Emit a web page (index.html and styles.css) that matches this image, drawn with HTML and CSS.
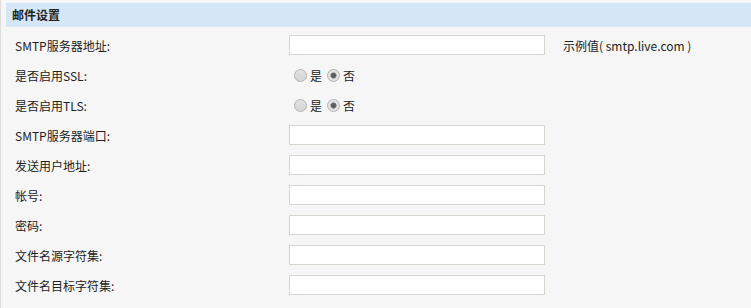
FILE: index.html
```html
<!DOCTYPE html>
<html lang="zh-CN">
<head>
  <meta charset="UTF-8" />
  <title>邮件设置</title>
  <link rel="stylesheet" href="styles.css">
</head>
<body>
  <div class="panel">
    <div class="panel-title">邮件设置</div>
    <div class="form">
      <div class="row">
        <label class="label">SMTP服务器地址:</label>
        <input class="field" type="text" />
        <span class="hint">示例值( smtp.live.com )</span>
      </div>
      <div class="row">
        <label class="label">是否启用SSL:</label>
        <span class="choice"><input type="radio" name="ssl" class="radio" /><span>是</span><input type="radio" name="ssl" class="radio" checked /><span>否</span></span>
      </div>
      <div class="row">
        <label class="label">是否启用TLS:</label>
        <span class="choice"><input type="radio" name="tls" class="radio" /><span>是</span><input type="radio" name="tls" class="radio" checked /><span>否</span></span>
      </div>
      <div class="row">
        <label class="label">SMTP服务器端口:</label>
        <input class="field" type="text" />
      </div>
      <div class="row">
        <label class="label">发送用户地址:</label>
        <input class="field" type="text" />
      </div>
      <div class="row">
        <label class="label">帐号:</label>
        <input class="field" type="text" />
      </div>
      <div class="row">
        <label class="label">密码:</label>
        <input class="field" type="password" />
      </div>
      <div class="row">
        <label class="label">文件名源字符集:</label>
        <input class="field" type="text" />
      </div>
      <div class="row">
        <label class="label">文件名目标字符集:</label>
        <input class="field" type="text" />
      </div>
    </div>
  </div>
</body>
</html>
```

FILE: styles.css
```css
:root {
  --font-ui: "Microsoft YaHei", "Noto Sans CJK SC", "Noto Sans", sans-serif;
  --page-bg: #f6f6f6;
  --title-bg: #d5e6f6;
  --text: #222;
  --field-border: #d8d5ce;
}
*, *::before, *::after { box-sizing: border-box; }

html, body {
  margin: 0;
  padding: 0;
  background: var(--page-bg);
}
body {
  font-family: var(--font-ui);
  font-size: 12px;
  color: var(--text);
}
.panel {
  padding: 3px 0 8px 5px;
  border-left: 1px solid #dcdcdc;
  min-height: 308px;
}
.panel-title {
  height: 24px;
  line-height: 24px;
  padding-left: 6px;
  background: var(--title-bg);
  font-weight: bold;
  font-size: 12px;
}
.form {
  padding-top: 3px;
}
.row {
  display: flex;
  align-items: center;
  height: 30px;
}
.label {
  width: 283px;
  padding-left: 9px;
}
.field {
  width: 256px;
  height: 20px;
  margin: 0;
  padding: 1px 4px;
  border: 1px solid var(--field-border);
  background: #fff;
  font: inherit;
  outline: none;
}
.hint {
  margin-left: 18px;
}
.choice {
  display: flex;
  align-items: center;
}
.radio {
  appearance: none;
  -webkit-appearance: none;
  width: 13px;
  height: 13px;
  margin: 0 3px 0 5px;
  border: 1px solid #b3b3b3;
  border-radius: 50%;
  background: linear-gradient(#e2e2e2, #d4d4d4);
}
.radio:checked {
  background: radial-gradient(circle, #555 0, #666 2.5px, #e6e6e6 3.5px, #dadada 100%);
}
```
